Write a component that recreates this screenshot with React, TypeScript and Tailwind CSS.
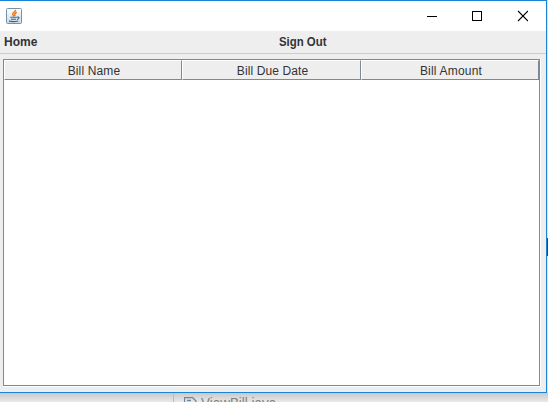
const columns = [
  { label: 'Bill Name', width: 'w-[178px]', tracking: 'tracking-[0.15px]' },
  { label: 'Bill Due Date', width: 'w-[179px]', tracking: 'tracking-[0.1px]' },
  { label: 'Bill Amount', width: 'w-[178px]', tracking: 'tracking-[0.2px]' },
];

function JavaIcon() {
  return (
    <svg width="16" height="16" viewBox="0 0 16 16" fill="none">
      <defs>
        <linearGradient id="tile" x1="0" y1="0" x2="0" y2="1">
          <stop offset="0" stopColor="#ffffff" />
          <stop offset="1" stopColor="#cbd9e3" />
        </linearGradient>
      </defs>
      <rect x="0.5" y="0.5" width="15" height="15" rx="1" fill="url(#tile)" stroke="#7592a8" />
      <path d="M9.5 1.8C10 4 6 4.5 6.7 6.3L8 8.3M10.8 4.3C8.7 5.3 8 6.2 9.2 8" stroke="#f07a18" strokeWidth="1.5" />
      <path d="M4.3 9.3H10.8M5 11.2H10M3 13.1C5.5 13.7 9.5 13.6 12.2 13M11 9.2C13.7 8.4 13.6 10.8 11 11.4" stroke="#376a91" strokeWidth="1.1" />
    </svg>
  );
}

function TitleBar() {
  return (
    <div className="flex h-[30px] items-center bg-white pl-[6px]">
      <JavaIcon />
      <svg className="ml-auto mr-[18px]" width="102" height="12" fill="none" stroke="#000" shapeRendering="crispEdges">
        <path d="M1 6.5H11" />
        <rect x="46.5" y="1.5" width="9" height="9" />
        <path d="M92 1L102 11M102 1L92 11" shapeRendering="auto" strokeWidth="1.1" />
      </svg>
    </div>
  );
}

export default function App() {
  return (
    <div className="h-[402px] w-[548px] overflow-hidden bg-[#e9e9e9] font-['Liberation_Sans',Arial,sans-serif] text-[#333]">
      <div className="flex h-[393px]">
        <div className="flex w-[547px] flex-col border-y border-r border-[#1883d7] bg-[#eee]">
          <TitleBar />
          <div className="flex h-[23px] shrink-0 items-center border-b border-[#ccc] text-[12px] font-bold">
            <div className="w-[275px] pl-[4px]">Home</div>
            <div className="pl-[4px]"><span className="inline-block origin-left scale-x-[0.95]">Sign Out</span></div>
          </div>
          <div className="ml-[3px] mt-[5px] h-[328px] w-[538px] border-b border-r border-white">
            <div className="h-[327px] w-[537px] border border-[#7a8a99] bg-white">
              <div className="flex h-[20px] text-[12px]">
                {columns.map((c) => (
                  <div
                    key={c.label}
                    className={`${c.width} ${c.tracking} flex items-center justify-center border-b border-l border-r border-t border-b-[#7a8a99] border-l-white border-r-[#7a8a99] border-t-white bg-[#eee] pl-[2px] pt-[2px]`}
                  >
                    {c.label}
                  </div>
                ))}
              </div>
            </div>
          </div>
        </div>
        <div className="w-px bg-[#dce4eb] pt-[238px]">
          <div className="h-[18px] bg-[#174b80]" />
        </div>
      </div>
      <div className="flex h-[9px] overflow-hidden bg-linear-to-b from-[#c9c9c9] to-[#e9e9e9]">
        <div className="w-[174px] shrink-0 border-r border-[#bbb]" />
        <svg className="ml-[10px] mt-[4px] shrink-0" width="13" height="14" fill="none" stroke="#71869c" strokeWidth="1.3">
          <path d="M.5 14V.5H8.5L12 4V14M3 3.5H7M3 6.5H9" />
        </svg>
        <span className="ml-[4px] mt-[2px] origin-left scale-x-[0.96] text-[14px] leading-[16px] text-[#808080]">ViewBill.java</span>
      </div>
    </div>
  );
}
